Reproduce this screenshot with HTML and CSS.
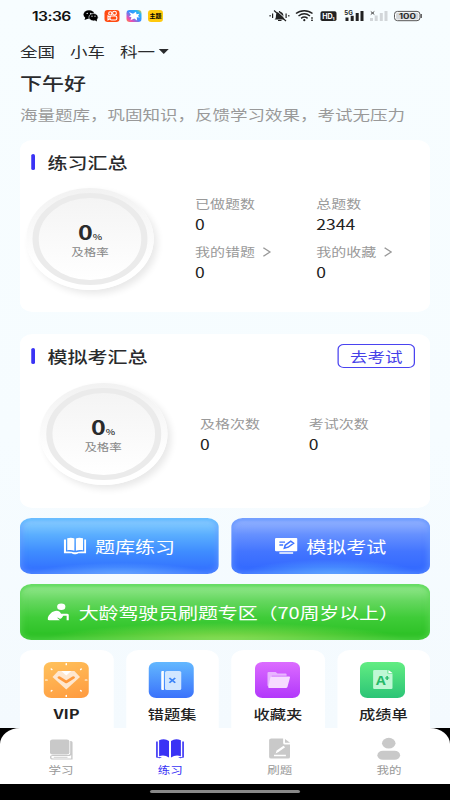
FILE: index.html
```html
<!DOCTYPE html>
<html lang="zh-CN">
<head>
<meta charset="utf-8">
<title>练习</title>
<link rel="stylesheet" href="styles.css">
</head>
<body>
<div class="screen">
  <main class="page">
    <div class="status">
      <span class="time">13:36</span>
      <svg class="apps" viewBox="82 6 82 20" preserveAspectRatio="none">
        <ellipse cx="88.500" cy="14.500" rx="5.500" ry="4.300"/><path d="M85 17l-1 3 4-1.500z"/>
        <ellipse cx="93" cy="17.200" rx="4.600" ry="3.700" stroke="#f6fcff" stroke-width=".6"/><path d="M94 20l2.500 1.500-.3-3z"/>
        <g fill="#f6fcff"><circle cx="86.700" cy="13.400" r=".7"/><circle cx="90.300" cy="13.400" r=".7"/><circle cx="91.500" cy="16.200" r=".6"/><circle cx="94.500" cy="16.200" r=".6"/></g>
        <rect x="104" y="10" width="15" height="12" rx="3.200" fill="#ff4b12"/>
        <g fill="none" stroke="#fff" stroke-width="1.100"><circle cx="109.800" cy="13.400" r="1.600"/><circle cx="114" cy="13.200" r="1.900"/><rect x="109.500" y="16" width="6.800" height="4" rx="1.500"/><path d="M109.500 17l-2-1v3.800l2-1"/></g>
        <defs><linearGradient id="rb" x1="0" y1="1" x2="1" y2="0"><stop offset="0" stop-color="#ff9b28"/><stop offset=".2" stop-color="#f04cb0"/><stop offset=".5" stop-color="#3d8cff"/><stop offset=".8" stop-color="#26b6f5"/><stop offset="1" stop-color="#ffd02c"/></linearGradient></defs>
        <rect x="126" y="10" width="15" height="12" rx="3.200" fill="url(#rb)"/>
        <path d="M128.500 12l4 1.800 3-2 .5 2.500 3-.5-1.500 2.200 1.800 1.500-3-.2.300 3.200-2.800-2-3.800 1.800 1-3-2.500-.8 2-1.500z" fill="#fff"/>
        <rect x="147.500" y="10" width="15" height="12" rx="3.200" fill="#ffc90d"/>
        <text x="149" y="18.300" font-size="6" font-weight="700" textLength="12">主题</text>
      </svg>
      <svg class="signals" viewBox="268 6 156 20" preserveAspectRatio="none">
        <g fill="#222"><path d="M275 19.500c1.500-1 1.300-2.500 1.500-4.500.2-2.200 1.700-3 3-3.300V11h1.200v.7c2 .3 3 1.700 3.100 3.300.1 2 .2 3.500 1.600 4.500z"/><rect x="278.500" y="20" width="3.500" height="1"/><rect x="270" y="15" width="1.200" height="1.500"/><rect x="272.500" y="13.500" width="1.200" height="4.500"/><rect x="286" y="13.500" width="1.200" height="4.500"/><rect x="288.700" y="15" width="1.200" height="1.500"/></g>
        <path d="M276.500 10l11 10" stroke="#f6fcff" stroke-width="1"/><path d="M274.500 10.500l12 10.500" stroke="#222" stroke-width="1.200"/>
        <g fill="none" stroke="#222" stroke-width="1.500"><path d="M296.500 13.500c4.500-3.800 12-3.800 16.500 0"/><path d="M299 16c3.500-2.700 8-2.700 11.500 0"/><path d="M301.600 18.300c2-1.500 4.500-1.500 6.500 0"/></g><circle cx="304.800" cy="20.200" r="1.100" fill="#222"/>
        <rect x="311.500" y="17.300" width="2" height="1.400" fill="#444"/><rect x="311.500" y="19.600" width="2" height="1.400" fill="#444"/>
        <rect x="321" y="11.300" width="16" height="9.700" rx="1.800" fill="#222"/><text x="322.700" y="18.800" font-size="7.200" font-weight="700" fill="#fff" textLength="12.500">HD₁</text>
        <text x="344.800" y="14.800" font-size="6" font-weight="700" fill="#222" textLength="8.500" lengthAdjust="spacingAndGlyphs">5G</text>
        <g fill="#222"><rect x="346" y="17.500" width="3" height="3.500"/><rect x="351.200" y="15.800" width="3" height="5.200"/><rect x="356.200" y="13" width="3" height="8"/><rect x="361" y="11" width="3" height="10"/></g>
        <path d="M371.300 11.500l3.500 3M374.800 11.500l-3.500 3" stroke="#444" stroke-width="1"/>
        <g fill="#d2d6d9"><rect x="370.500" y="18" width="3" height="3"/><rect x="375.200" y="15.500" width="3" height="5.500"/><rect x="380.300" y="13" width="3" height="8"/><rect x="385" y="11" width="3" height="10"/></g>
        <rect x="395" y="11.400" width="25.500" height="9.300" rx="3" fill="#fff" stroke="#555" stroke-width="1"/><rect x="396.600" y="12.700" width="22.300" height="6.700" rx="1.500" fill="#d3d6d8"/><rect x="421" y="14" width="1.400" height="4" fill="#555"/>
        <text x="399.500" y="18.800" font-size="7.600" font-weight="600" fill="#222" textLength="17" lengthAdjust="spacingAndGlyphs">100</text>
      </svg>
    </div>

    <div class="filters"><span>全国</span><span>小车</span><span>科一</span><i class="caret"></i></div>
    <h1>下午好</h1>
    <p class="lead">海量题库，巩固知识，反馈学习效果，考试无压力</p>

    <section class="card practice">
      <div class="card-head"><h2>练习汇总</h2></div>
      <div class="card-body">
        <div class="gauge"><div class="dial"><p><b>0</b><small>%</small></p><span>及格率</span></div></div>
        <dl class="stats">
          <div><dt>已做题数</dt><dd>0</dd></div>
          <div><dt>总题数</dt><dd>2344</dd></div>
          <div><dt>我的错题<svg class="chev" viewBox="0 0 7 10"><path d="M.7.700L6 5 .7 9.300"/></svg></dt><dd>0</dd></div>
          <div><dt>我的收藏<svg class="chev" viewBox="0 0 7 10"><path d="M.7.700L6 5 .7 9.300"/></svg></dt><dd>0</dd></div>
        </dl>
      </div>
    </section>

    <section class="card exam">
      <div class="card-head"><h2>模拟考汇总</h2><button class="go">去考试</button></div>
      <div class="card-body">
        <div class="gauge"><div class="dial"><p><b>0</b><small>%</small></p><span>及格率</span></div></div>
        <dl class="stats">
          <div><dt>及格次数</dt><dd>0</dd></div>
          <div><dt>考试次数</dt><dd>0</dd></div>
        </dl>
      </div>
    </section>

    <div class="actions">
      <button class="action blue">
        <svg viewBox="0 0 18 18"><g fill="#fff"><path d="M2.800 1.200C5 .4 7 .5 8.500 1.500v12.200c-1.700-.9-3.700-.9-5.700-.4z"/><path d="M15.400 1.200C13.200.4 11.200.5 9.700 1.500v12.200c1.700-.9 3.700-.9 5.700-.4z"/><path d="M0 2.500h1.800v12.100c2.700-.4 4.600-.2 6.200.7h2.200c1.600-.9 3.500-1.100 6.200-.7V2.500H18v13.700h-6.500c-.8 1.300-4.200 1.300-5 0H0z"/></g></svg>
        <span>题库练习</span>
      </button>
      <button class="action indigo">
        <svg viewBox="0 0 18 18"><path d="M1 1h16q1 0 1 1v11.200q0 1-1 1H1q-1 0-1-1V2q0-1 1-1zM3.500 15.300h11v1.400h-11z" fill="#fff"/><g fill="none" stroke="#3f73ff" stroke-width="1.300"><path d="M3.500 5.200h4.500M3.500 8h3"/><path d="M7.500 11.200l.7-3 4.400-4 2.300 2-4.400 4z"/></g></svg>
        <span>模拟考试</span>
      </button>
      <button class="action green">
        <svg viewBox="0 0 18 18"><g fill="#fff"><circle cx="11" cy="3.800" r="3.300"/><path d="M1.200 17.200Q-.3 17.200.1 15C1.200 11.500 4 7.800 7.200 7.800c2 0 2.800 1 3.700 2.900h4.600q1.500 0 1.500 1.400v5.100h-1.700v-4.500h-2.600l-1.200 2.100c-.7 1.200-1.900 1-2.700.2l-.6-.6-.3.600 2 2.200z"/></g></svg>
        <span>大龄驾驶员刷题专区（70周岁以上）</span>
      </button>
    </div>

    <div class="tiles">
      <div class="tile"><div class="icon orange"><svg viewBox="0 0 36 36"><g stroke="#fff" stroke-width="1.200" stroke-linecap="round"><path d="M18 1.500v1.200M18 33.300v1.200M1.500 18h1.200M33.300 18h1.200M6 7l.5.500M29.500 28.500l.5.500M30 7l-.5.500M6.500 28.500l-.5.500"/></g><path d="M11.500 9h13l4.500 6-11 12.500L7 15z" fill="#ffe7ce"/><path d="M14 9h8l-4 4.500z" fill="#fff"/><path d="M12.300 15.500L18 20l5.700-4.500" fill="none" stroke="#ff9a3d" stroke-width="2.500" stroke-linecap="round" stroke-linejoin="round"/></svg></div><b>VIP</b></div>
      <div class="tile"><div class="icon azure"><svg viewBox="0 0 36 36"><path d="M11 9h-.2Q10 9 10 10v17q0 1 .8 1h1.300V9z" fill="#fff"/><rect x="13" y="9" width="13" height="19" rx="1.500" fill="#d1e6ff"/><path d="M16.500 16l4.700 4.700M21.200 16l-4.700 4.700" stroke="#3c84f8" stroke-width="1.500"/></svg></div><b>错题集</b></div>
      <div class="tile"><div class="icon violet"><svg viewBox="0 0 36 36"><path d="M11 10h5.500l1.500 1.500h6.500q.8 0 .8 1v1.300H13.500L10.800 25 10 23.500V11q0-1 1-1z" fill="#e8b5ff"/><path d="M13.500 14.500h13.700q1 0 .8 1l-2 9.300q-.2 1.200-1.400 1.200H11.400q-1 0-.8-1l1.700-9.500q.2-1 1.200-1z" fill="#f6dcff"/></svg></div><b>收藏夹</b></div>
      <div class="tile"><div class="icon mint"><svg viewBox="0 0 36 36"><path d="M11.500 8H22v3.500h4V26q0 1-1 1H11.500q-1 0-1-1V9q0-1 1-1z" fill="#bff8d5"/><path d="M22.700 8l3.300 3h-3.300z" fill="#fff"/><text x="12.800" y="23.200" font-size="12" font-weight="700" fill="#27ba68">A</text><path d="M21.700 14v4M20 16h3.400" stroke="#27ba68" stroke-width="1.200"/></svg></div><b>成绩单</b></div>
    </div>
  </main>

  <nav class="tabs">
    <a><svg viewBox="0 0 24 24"><rect x="3" y="2.500" width="15.500" height="15" rx="2" fill="#c9c9c9"/><path d="M19.700 4.500q.8 0 .8 1V22H5.500q-2 0-2-1.800t2-1.700h12q2.200 0 2.200-2z" fill="#fff" stroke="#c9c9c9" stroke-width="1.100"/><path d="M6 20.300h11" stroke="#c9c9c9" stroke-width=".8"/></svg><span>学习</span></a>
    <a class="on"><svg viewBox="0 0 24 24"><g fill="#3a33f5"><path d="M3.300 3.200Q7.800.8 11.200 4v16.500q-3.800-3.300-7.900-1.300z"/><path d="M20.700 3.200Q16.200.8 12.800 4v16.500q3.800-3.300 7.900-1.300z"/><path d="M.9 4.500h1.300v15.700l3.300-.2-1.700 1.300-2.900-.8zM23.100 4.500h-1.300v15.700l-3.300-.2 1.700 1.300 2.900-.8z"/></g></svg><span>练习</span></a>
    <a><svg viewBox="0 0 24 24"><path d="M5 1.500h9.500V6q0 1.500 1.500 1.500h4V20q0 1.500-1.500 1.500H5q-1.700 0-1.700-1.500V3Q3.300 1.500 5 1.500z" fill="#c9c9c9"/><path d="M16 2l4 3.800h-4z" fill="#c9c9c9"/><path d="M8.500 16.500l.8-3 5.500-4.700 1.300 1.500-5.300 4.800zM7.200 17.800h9.500v1.400H7.200z" fill="#fff"/></svg><span>刷题</span></a>
    <a><svg viewBox="0 0 24 24"><g fill="#c9c9c9"><circle cx="12" cy="6.200" r="5.400"/><rect x="2.900" y="13.700" width="18.200" height="9" rx="4.500"/></g></svg><span>我的</span></a>
  </nav>
  <div class="homebar"><i></i></div>
</div>
</body>
</html>
```
FILE: styles.css
```css
* { box-sizing: border-box; margin: 0; padding: 0; }
html { width: 450px; height: 800px; overflow: hidden; background: #000; }
body { width: 450px; height: 800px; overflow: hidden; }

/* A 360-unit wide phone layout spread over the full window width. */
.screen {
  width: 360px; height: 800px;
  transform: scaleX(1.25); transform-origin: 0 0;
  display: flex; flex-direction: column;
  background: #000; color: #2a2b2d;
  font-family: "Noto Sans CJK SC", "Noto Sans", sans-serif;
}
svg { display: block; }
button { border: 0; background: none; font: inherit; }
.page { height: 728px; overflow: hidden; padding: 0 16px; background: linear-gradient(#f7fdff, #f6fcff 60%, #f4fafe); }

.status { height: 32px; display: flex; align-items: center; padding-left: 9.500px; }
.time { width: 40.500px; font: 600 12.500px/20px Inter, sans-serif; color: #111; letter-spacing: -.4px; padding-top: 1px; }
.apps { width: 65.600px; height: 20px; }
.signals { width: 124.800px; height: 20px; margin-left: 82.800px; font-family: Inter, sans-serif; }
.apps text { font-family: "Noto Sans CJK SC", sans-serif; }

.filters { display: flex; align-items: center; height: 20px; margin-top: 9px; font-size: 14px; line-height: 20px; }
.filters span { margin-right: 12px; }
.filters span:nth-child(3) { margin-right: 2.500px; }
.caret { border: 4.500px solid transparent; border-top: 5.500px solid #2a2b2d; border-bottom: 0; }
h1 { font-size: 17.600px; line-height: 24px; margin-top: 10px; font-weight: 500; }
.lead { font-size: 14px; line-height: 20px; margin-top: 9px; color: #999; white-space: nowrap; }

.card { background: #fff; border-radius: 10px; }
.practice { height: 172px; margin-top: 16px; }
.exam { height: 174px; margin-top: 22px; }
.card-head { height: 44px; display: flex; align-items: center; justify-content: space-between; padding: 0 12px 0 9px; }
.card-head h2 { display: flex; align-items: center; font-size: 16px; line-height: 24px; font-weight: 500; }
.card-head h2::before { content: ""; width: 3px; height: 16px; border-radius: 1.500px; background: #3a33f5; margin-right: 10px; }
.go { width: 62px; height: 24px; border: 1px solid #4a43f0; border-radius: 5px; color: #4540e8; font-size: 14px; line-height: 20px; }
.card-body { display: flex; }

.gauge {
  flex: none; width: 102px; height: 102px; padding: 5px; border-radius: 50%;
  background: linear-gradient(#f2f2f2, #fff 75%);
  box-shadow: 3px 4px 7px rgba(0, 0, 0, .09);
}
.dial {
  width: 92px; height: 92px; border: 5px solid #ebebeb; border-radius: 50%;
  background: linear-gradient(#f4f4f4, #fff) padding-box;
  display: flex; flex-direction: column; align-items: center; padding-top: 22px;
}
.dial p { line-height: 24px; height: 25px; white-space: nowrap; }
.dial b { font-size: 20px; font-weight: 700; }
.dial small { font-size: 8px; font-weight: 500; }
.dial span { font-size: 10px; line-height: 14px; color: #888; }
.practice .gauge { margin: 4px 0 0 5px; }
.exam .gauge { margin: 5px 0 0 15.500px; }

.stats { display: grid; align-content: start; }
.practice .stats { grid-template-columns: 97px auto; row-gap: 8px; margin: 10px 0 0 33px; }
.exam .stats { grid-template-columns: 87px auto; margin: 36px 0 0 26.500px; }
dt { display: flex; align-items: center; font-size: 12px; line-height: 20px; color: #999; white-space: nowrap; }
dd { font-size: 14px; line-height: 20px; color: #222; }
.chev { width: 7px; height: 10px; margin-left: 6px; fill: none; stroke: #999; stroke-width: 1.100; }

.actions { display: grid; grid-template-columns: 159px 159px; gap: 10px; margin-top: 10px; }
.action { height: 56px; border-radius: 9px; display: flex; align-items: center; justify-content: center; gap: 7px; color: #fff; font-size: 16px; line-height: 24px; padding-bottom: 1px; white-space: nowrap; }
.action svg { width: 18px; height: 18px; }
.blue {
  background: radial-gradient(ellipse 45% 22% at 50% 102%, #62adff, transparent), linear-gradient(#8fd3ff, #5aaeff 30%, #3f8dff 60%, #3474ff 90%);
  box-shadow: inset 0 3px 2px rgba(86, 190, 255, .55), inset 0 0 5px 2px rgba(110, 150, 255, .5);
}
.indigo {
  background: radial-gradient(ellipse 45% 28% at 50% 102%, #58a8ff, transparent), linear-gradient(#9cb9ff, #6590ff 30%, #4375ff 60%, #346aff 90%);
  box-shadow: inset 0 3px 2px rgba(95, 145, 255, .5), inset 0 0 5px 2px rgba(105, 155, 255, .5);
}
.green {
  grid-column: 1 / -1;
  background: radial-gradient(ellipse 45% 35% at 50% 104%, #a2e25a, transparent), linear-gradient(#98ea92, #65d75f 30%, #3fcc38 60%, #2ec227 90%);
  box-shadow: inset 0 3px 2px rgba(80, 215, 80, .55), inset 0 0 5px 2px rgba(100, 218, 90, .5);
}
.green span { letter-spacing: -.1px; }
.green { padding-right: 3px; }

.tiles { display: grid; grid-template-columns: repeat(4, 74.500px); gap: 10px; margin-top: 10px; }
.tile { height: 90px; padding-top: 12px; background: #fff; border-radius: 10px; display: flex; flex-direction: column; align-items: center; }
.tile b { font-size: 13px; line-height: 20px; margin-top: 6px; font-weight: 500; color: #222; }
.tile:first-child b { font-weight: 700; }
.icon { width: 36px; height: 36px; border-radius: 6px; margin-left: -1px; }
.orange { background: linear-gradient(160deg, #ffc25c, #ff9a3f); }
.azure { background: linear-gradient(#63b8ff, #3a72fb); }
.violet { background: linear-gradient(#dc6cff, #b238fb); }
.mint { background: linear-gradient(#62ed82, #2bc476); }

.tabs { height: 56px; background: #fff; border-radius: 16px 16px 0 0; display: grid; grid-template-columns: repeat(4, 1fr); padding: 0 5px; }
.tabs a { display: flex; flex-direction: column; align-items: center; padding-top: 9px; color: #999; font-size: 10px; line-height: 14px; }
.tabs svg { width: 24px; height: 24px; margin-bottom: 2px; }
.tabs .on { color: #3a33f5; }
.homebar { height: 16px; display: flex; justify-content: center; padding-top: 6px; }
.homebar i { width: 120px; height: 3px; border-radius: 2px; background: #888; }
```
